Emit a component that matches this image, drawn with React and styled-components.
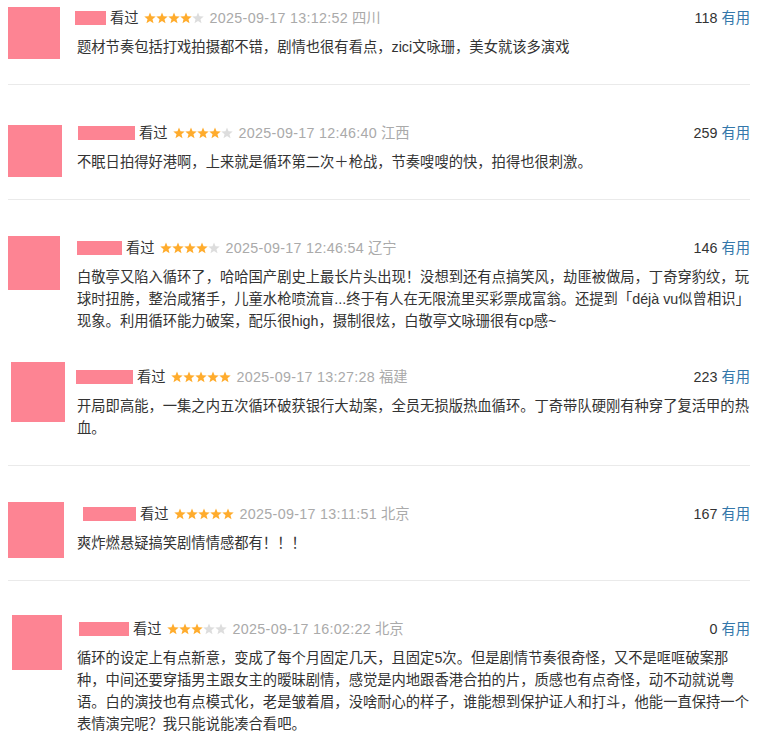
import React from "react";
import styled, { createGlobalStyle } from "styled-components";

const GlobalStyle = createGlobalStyle`
  body {
    margin: 0;
    background: #fff;
    font-family: Arial, "Liberation Sans", "Noto Sans CJK SC", sans-serif;
  }
`;

const List = styled.div`
  width: 742px;
  padding-left: 8px;
`;

const Item = styled.div`
  display: flex;
  align-items: flex-start;
  padding: 38px 0 ${(p) => (p.$tight ? 0 : 26)}px;
  margin-bottom: ${(p) => (p.$tight ? -3 : 0)}px;
  border-bottom: ${(p) => (p.$tight ? "none" : "1px solid #eaeaea")};
  &:first-child {
    padding-top: 8px;
  }
`;

/* avatar hangs beside the text; item height follows the text */
const AvatarCol = styled.div`
  flex: 0 0 69px;
  height: 0;
`;

const Avatar = styled.div`
  width: ${(p) => p.$w}px;
  height: ${(p) => p.$h}px;
  margin-left: ${(p) => p.$dx}px;
  margin-top: ${(p) => p.$dy}px;
  background: #fd8493;
`;

const Content = styled.div`
  flex: 1;
  min-width: 0;
`;

const Header = styled.div`
  display: flex;
  align-items: center;
  height: 20px;
  font-size: 14.3px;
  line-height: 20px;
  color: #333;
`;

const Name = styled.span`
  display: inline-block;
  width: ${(p) => p.$w}px;
  height: 14px;
  margin-left: ${(p) => p.$dx}px;
  margin-right: 4px;
  background: #fd8493;
`;

const Watched = styled.span`
  margin-right: 5px;
`;

const Stars = styled.span`
  display: inline-flex;
  margin-right: 6px;
`;

const Time = styled.span`
  color: #aaa;
  letter-spacing: 0.3px;
  margin-right: 4px;
`;

const Loc = styled.span`
  color: #aaa;
`;

const Votes = styled.span`
  margin-left: auto;
  color: #333;
  a {
    color: #37a;
    text-decoration: none;
    margin-left: 4px;
  }
`;

const Body = styled.p`
  margin: 8px 0 0;
  font-size: 14.3px;
  line-height: 22px;
  color: #333;
`;

const Star = ({ on }) => (
  <svg width="12" height="12" viewBox="0 0 24 24">
    <polygon
      points="12,0.8 15.06,8.59 23.41,9.09 16.95,14.41 19.05,22.51 12,18 4.95,22.51 7.05,14.41 0.59,9.09 8.94,8.59"
      fill={on ? "#ffac2d" : "#dddddd"}
    />
  </svg>
);

const reviews = [
  {
    av: [52, 52, 0, -1],
    name: [31, -2],
    rating: 4,
    time: "2025-09-17 13:12:52",
    loc: "四川",
    votes: 118,
    text: "题材节奏包括打戏拍摄都不错，剧情也很有看点，zici文咏珊，美女就该多演戏",
  },
  {
    av: [54, 52, 0, 2],
    name: [57, 1],
    rating: 4,
    time: "2025-09-17 12:46:40",
    loc: "江西",
    votes: 259,
    text: "不眠日拍得好港啊，上来就是循环第二次＋枪战，节奏嗖嗖的快，拍得也很刺激。",
  },
  {
    av: [52, 54, 0, -2],
    name: [45, 0],
    rating: 4,
    tight: true,
    time: "2025-09-17 12:46:54",
    loc: "辽宁",
    votes: 146,
    text: "白敬亭又陷入循环了，哈哈国产剧史上最长片头出现！没想到还有点搞笑风，劫匪被做局，丁奇穿豹纹，玩球时扭胯，整治咸猪手，儿童水枪喷流盲...终于有人在无限流里买彩票成富翁。还提到「déjà vu似曾相识」现象。利用循环能力破案，配乐很high，摄制很炫，白敬亭文咏珊很有cp感~",
  },
  {
    av: [54, 60, 3, -5],
    name: [57, -1],
    rating: 5,
    time: "2025-09-17 13:27:28",
    loc: "福建",
    votes: 223,
    text: "开局即高能，一集之内五次循环破获银行大劫案，全员无损版热血循环。丁奇带队硬刚有种穿了复活甲的热血。",
  },
  {
    av: [56, 56, 0, -2],
    name: [53, 6],
    rating: 5,
    time: "2025-09-17 13:11:51",
    loc: "北京",
    votes: 167,
    text: "爽炸燃悬疑搞笑剧情情感都有！！！",
  },
  {
    av: [50, 55, 4, -4],
    name: [50, 2],
    rating: 3,
    tight: true,
    time: "2025-09-17 16:02:22",
    loc: "北京",
    votes: 0,
    text: "循环的设定上有点新意，变成了每个月固定几天，且固定5次。但是剧情节奏很奇怪，又不是哐哐破案那种，中间还要穿插男主跟女主的暧昧剧情，感觉是内地跟香港合拍的片，质感也有点奇怪，动不动就说粤语。白的演技也有点模式化，老是皱着眉，没啥耐心的样子，谁能想到保护证人和打斗，他能一直保持一个表情演完呢？我只能说能凑合看吧。",
  },
];

const App = () => (
  <>
    <GlobalStyle />
    <List>
      {reviews.map((r, i) => (
        <Item key={i} $tight={r.tight}>
          <AvatarCol>
            <Avatar $w={r.av[0]} $h={r.av[1]} $dx={r.av[2]} $dy={r.av[3]} />
          </AvatarCol>
          <Content>
            <Header>
              <Name $w={r.name[0]} $dx={r.name[1]} />
              <Watched>看过</Watched>
              <Stars>
                {[0, 1, 2, 3, 4].map((n) => (
                  <Star key={n} on={n < r.rating} />
                ))}
              </Stars>
              <Time>{r.time}</Time>
              <Loc>{r.loc}</Loc>
              <Votes>
                {r.votes}
                <a href="#">有用</a>
              </Votes>
            </Header>
            <Body>{r.text}</Body>
          </Content>
        </Item>
      ))}
    </List>
  </>
);

export default App;
